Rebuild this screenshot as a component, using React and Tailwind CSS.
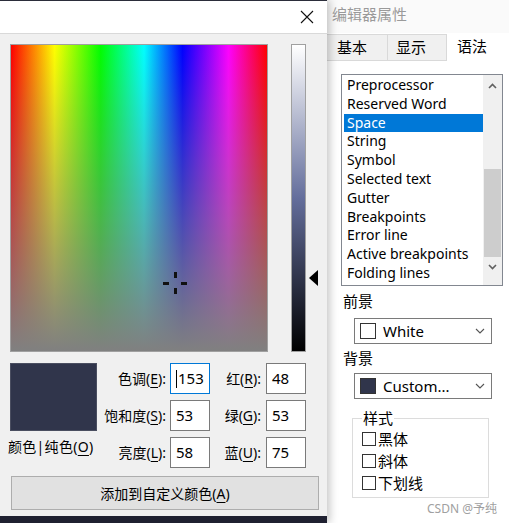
import React from "react";

const FONT = "font-['Noto_Sans','Noto_Sans_CJK_SC',sans-serif]";

// underlined access key
const K = ({ children }) => <span className="underline underline-offset-[3px]">{children}</span>;

const NumBox = ({ value, focused }) => (
  <div
    className={
      "w-[40px] h-[31px] bg-white border flex items-center pl-[5px] text-[15px] text-black " +
      (focused ? "border-[#0078d7]" : "border-[#7a7a7a]")
    }
  >
    {focused && <span className="w-px h-[18px] bg-black mr-px" />}
    {value}
  </div>
);

const Row = ({ l1, v1, l2, v2, focused }) => (
  <div className="flex items-center h-[31px]">
    <div className="w-[70px] text-right text-[14px] pr-[1px]">{l1}</div>
    <div className="ml-[3px]">
      <NumBox value={v1} focused={focused} />
    </div>
    <div className="w-[52px] text-right text-[14px] pr-[1px]">{l2}</div>
    <div className="ml-[4px]">
      <NumBox value={v2} />
    </div>
  </div>
);

function ColorDialog() {
  return (
    <div className="relative z-10 w-[328px] flex flex-col shadow-[3px_0_8px_rgba(0,0,0,0.22)]">
      <div className="h-[34px] bg-white border-t border-[#2b2d3a] border-b border-b-[#d9d9d9] flex items-center justify-end pr-[13px]">
        <svg width="14" height="14" viewBox="0 0 14 14">
          <path d="M1 1L13 13M13 1L1 13" stroke="#111" strokeWidth="1.1" />
        </svg>
      </div>
      <div className="flex-1 bg-[#f0f0f0] pl-[10px] pt-[10px]">
        <div className="flex">
          <div className="relative w-[258px] h-[308px] border border-[#a0a0a0] bg-[linear-gradient(to_right,#f00_0%,#ff0_17%,#0f0_35%,#0ff_52%,#00f_67%,#f0f_85%,#f00_100%)]">
            <div className="absolute inset-0 bg-[linear-gradient(to_bottom,rgba(128,128,128,0),rgba(128,128,128,0.55)_55%,#808080)]" />
            <svg className="absolute left-[151px] top-[225px]" width="26" height="26" viewBox="0 0 26 26">
              <rect x="12" y="2" width="3" height="6" fill="#111" />
              <rect x="12" y="18" width="3" height="6" fill="#111" />
              <rect x="1" y="12" width="6" height="3" fill="#111" />
              <rect x="19" y="12" width="6" height="3" fill="#111" />
            </svg>
          </div>
          <div className="ml-[23px] w-[15px] h-[308px] border border-[#a0a0a0] bg-[linear-gradient(to_bottom,#fff,#646e9c,#000)]" />
          <div className="relative w-[20px] h-[308px]">
            <svg className="absolute left-[3px] top-[226px]" width="10" height="16" viewBox="0 0 10 16">
              <path d="M9 0V16L0 8Z" fill="#000" />
            </svg>
          </div>
        </div>

        <div className="flex mt-[11px]">
          <div className="w-[87px] flex flex-col">
            <div className="h-[68px] bg-[#30354b] border border-[#4a4e60]" />
            <div className="mt-[5px] -ml-[2px] text-[14px] whitespace-nowrap tracking-[0.3px]">
              颜色|纯色(<K>O</K>)
            </div>
          </div>
          <div className="flex flex-col gap-[6px]">
            <Row l1={<>色调(<K>E</K>):</>} v1="153" focused l2={<>红(<K>R</K>):</>} v2="48" />
            <Row l1={<>饱和度(<K>S</K>):</>} v1="53" l2={<>绿(<K>G</K>):</>} v2="53" />
            <Row l1={<>亮度(<K>L</K>):</>} v1="58" l2={<>蓝(<K>U</K>):</>} v2="75" />
          </div>
        </div>

        <button className="mt-[8px] ml-[1px] w-[308px] h-[34px] bg-[#e1e1e1] border border-[#adadad] text-[14px] text-black">
          添加到自定义颜色(<K>A</K>)
        </button>
      </div>
      <div className="h-[7px] bg-[#1f2030]" />
    </div>
  );
}

const items = [
  "Preprocessor",
  "Reserved Word",
  "Space",
  "String",
  "Symbol",
  "Selected text",
  "Gutter",
  "Breakpoints",
  "Error line",
  "Active breakpoints",
  "Folding lines",
];

const Combo = ({ swatch, label }) => (
  <div className="ml-[13px] w-[138px] h-[26px] bg-white border border-[#7a7a7a] flex items-center pl-[5px] pr-[6px]">
    <div className={"w-[16px] h-[16px] border border-[#333] " + swatch} />
    <span className="ml-[7px] text-[15px] flex-1">{label}</span>
    <svg width="10" height="6" viewBox="0 0 10 6">
      <path d="M1 1L5 5L9 1" stroke="#555" fill="none" strokeWidth="1.1" />
    </svg>
  </div>
);

const Check = ({ label }) => (
  <div className="flex items-center h-[22px]">
    <div className="w-[14px] h-[14px] border border-[#333] bg-white" />
    <span className="ml-[2px] text-[15px]">{label}</span>
  </div>
);

function SyntaxPanel() {
  return (
    <div className="flex-1 flex flex-col bg-white">
      <div className="h-[33px] bg-[#fafafa] pl-[5px] pt-[3px] text-[15px] text-[#9a9a9a]">编辑器属性</div>
      <div className="h-[28px] flex items-end bg-white border-b border-[#d9d9d9]">
        <div className="w-[61px] h-[26px] bg-[#f0f0f0] border-t border-r border-[#d9d9d9] pl-[10px] text-[15px] leading-[25px]">
          基本
        </div>
        <div className="w-[59px] h-[26px] bg-[#f0f0f0] border-t border-r border-[#d9d9d9] pl-[8px] text-[15px] leading-[25px]">
          显示
        </div>
        <div className="w-[62px] h-[28px] -mb-px bg-white pl-[10px] text-[15px] leading-[26px]">语法</div>
      </div>
      <div className="pl-[14px] pt-[13px]">
        <div className="w-[162px] h-[212px] border border-[#828790] flex">
          <div className="flex-1 pl-[2px] pt-[1px]">
            {items.map((it) => (
              <div
                key={it}
                className={
                  "h-[18.8px] leading-[18.8px] pl-[3px] text-[14px] whitespace-nowrap " +
                  (it === "Space" ? "bg-[#0078d7] text-white" : "text-black")
                }
              >
                {it}
              </div>
            ))}
          </div>
          <div className="w-[19px] bg-[#f0f0f0] flex flex-col items-center">
            <svg className="mt-[8px]" width="9" height="6" viewBox="0 0 9 6">
              <path d="M1 5L4.5 1.5L8 5" stroke="#606060" fill="none" strokeWidth="1.6" />
            </svg>
            <div className="mt-[80px] w-[17px] h-[88px] bg-[#cdcdcd]" />
            <svg className="mt-[7px]" width="9" height="6" viewBox="0 0 9 6">
              <path d="M1 1L4.5 4.5L8 1" stroke="#606060" fill="none" strokeWidth="1.6" />
            </svg>
          </div>
        </div>

        <div className="mt-[5px] ml-[2px] text-[15px] leading-[20px]">前景</div>
        <div className="mt-[7px]">
          <Combo swatch="bg-white" label="White" />
        </div>
        <div className="mt-[4px] ml-[2px] text-[15px] leading-[20px]">背景</div>
        <div className="mt-[5px]">
          <Combo swatch="bg-[#30354b]" label="Custom..." />
        </div>

        <div className="relative ml-[11px] mt-[19px] w-[137px] h-[80px] border border-[#dcdcdc] pl-[9px] pt-[9px]">
          <div className="absolute -top-[11px] left-[9px] bg-white text-[15px] leading-[20px] px-px">样式</div>
          <Check label="黑体" />
          <Check label="斜体" />
          <Check label="下划线" />
        </div>
        <div className="mt-[2px] ml-[86px] text-[12px] text-[#a0a0a0] whitespace-nowrap">CSDN @予纯</div>
      </div>
    </div>
  );
}

export default function App() {
  return (
    <div className={"w-[509px] h-[523px] flex overflow-hidden bg-white text-black " + FONT}>
      <ColorDialog />
      <SyntaxPanel />
    </div>
  );
}
